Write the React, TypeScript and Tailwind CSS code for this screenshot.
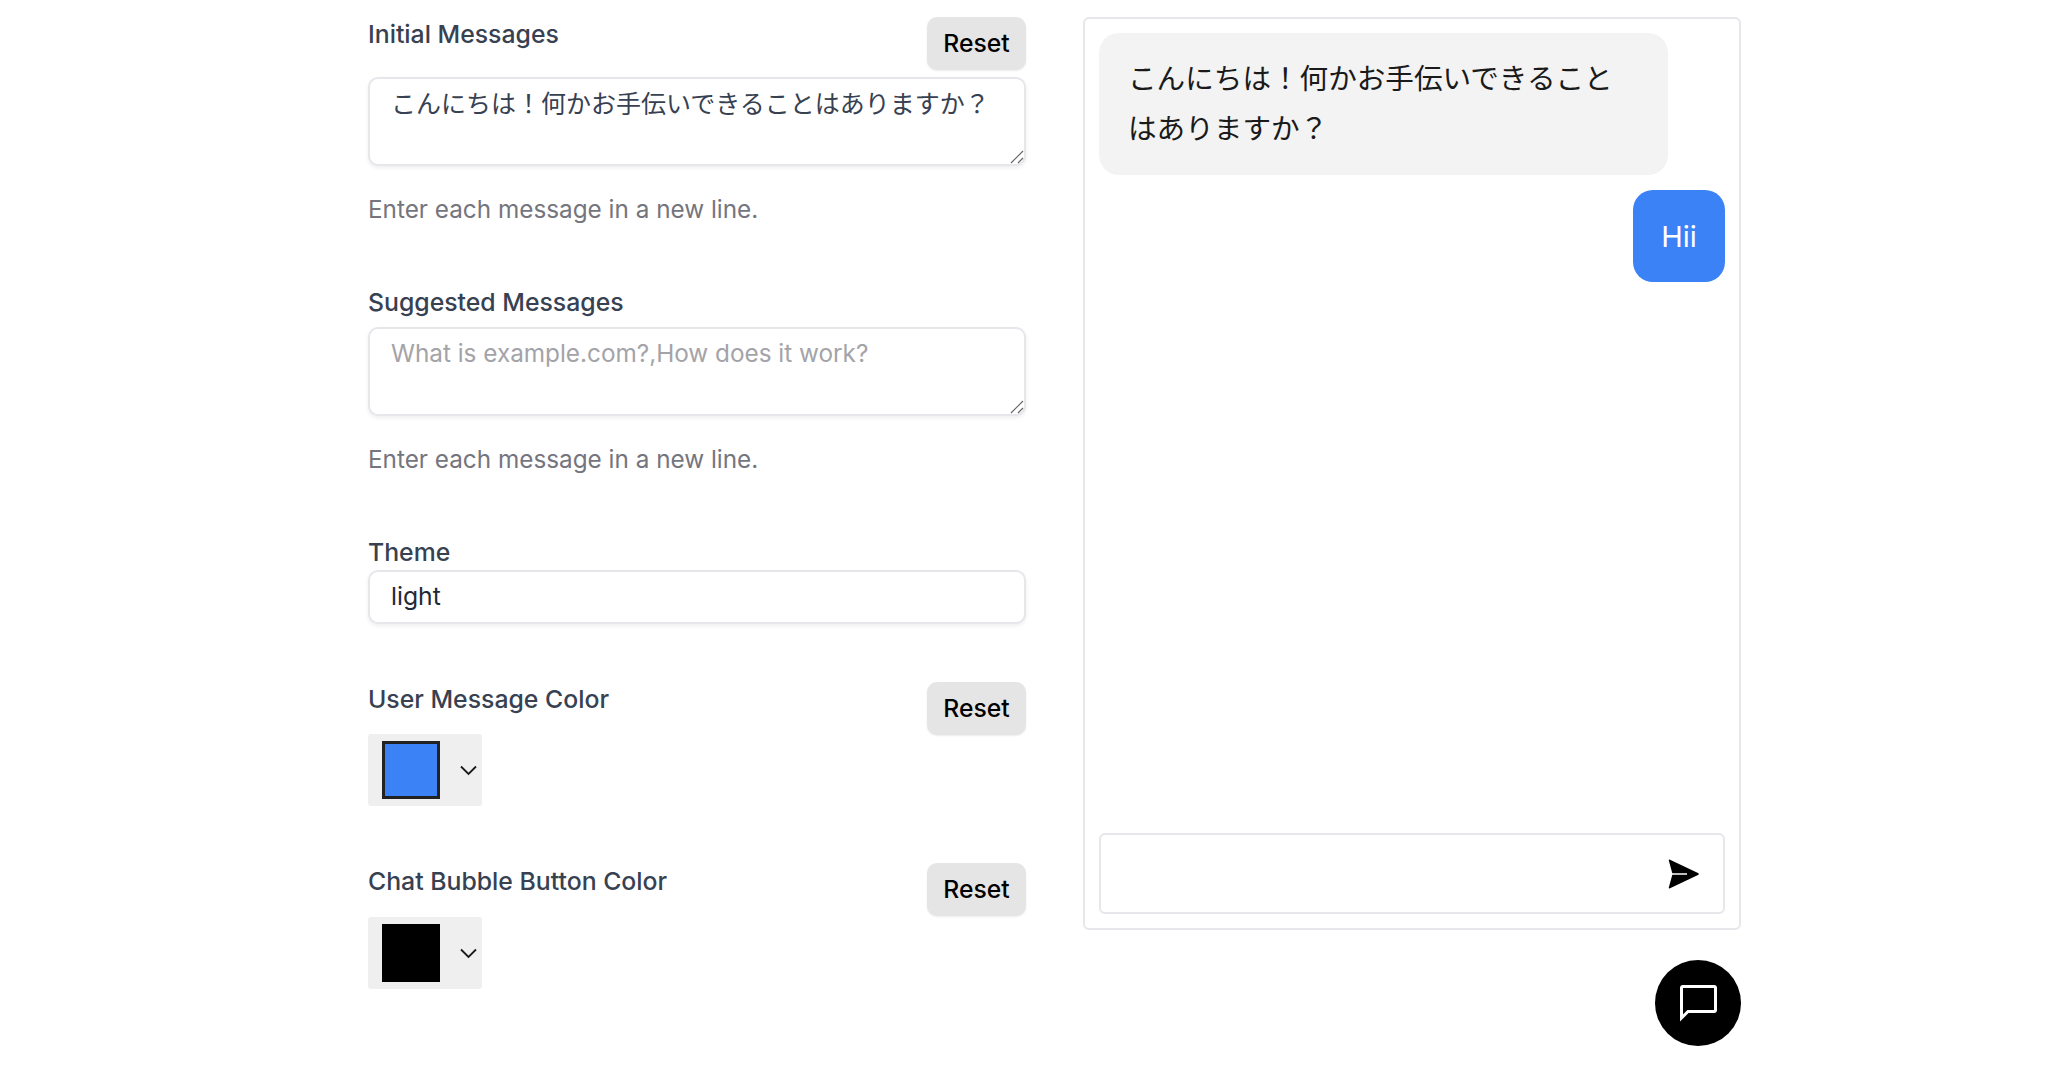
const font = { fontFamily: '"Inter", "Noto Sans CJK JP", sans-serif' };

function ResetButton() {
  return (
    <button className="w-[99px] h-[53px] pt-[1px] rounded-[10px] bg-[#e5e5e6] text-[24.7px] font-medium text-black shadow-[0_1px_2px_rgba(0,0,0,0.08)]">
      Reset
    </button>
  );
}

function Swatch({ color, border }: { color: string; border: string }) {
  return (
    <div className="w-[114px] h-[72px] rounded-[3px] bg-[#efefef] flex items-center pl-[14px]">
      <div className={`w-[58px] h-[58px] ${color} ${border}`} />
      <svg className="ml-[20px]" width="17" height="11" viewBox="0 0 17 11" fill="none">
        <path d="M1 1.5 L8.5 9 L16 1.5" stroke="#1a1a1a" strokeWidth="1.8" />
      </svg>
    </div>
  );
}

function Area({ value, placeholder, size, top }: { value?: string; placeholder?: string; size: string; top: string }) {
  return (
    <div className="relative">
      <textarea
        readOnly
        defaultValue={value}
        placeholder={placeholder}
        className={`block w-full h-[89px] resize-none rounded-[10px] border-2 border-[#e5e7eb] bg-white pl-[21px] pr-[22px] ${top} ${size} leading-[32px] text-[#374151] placeholder:text-[#a3a3a8] shadow-[0_2px_4px_rgba(0,0,0,0.07)] outline-none`}
        style={font}
      />
      <svg className="absolute right-[2px] bottom-[2px]" width="14" height="14" viewBox="0 0 14 14" fill="none">
        <path d="M1 13 L13 1 M8 13 L13 8" stroke="#666" strokeWidth="1.2" />
      </svg>
    </div>
  );
}

export default function App() {
  return (
    <div className="w-full h-[1081px] bg-white overflow-hidden flex pt-[17px] pl-[368px]" style={font}>
      <div className="w-[658px] shrink-0">
        <div className="flex justify-between items-start h-[60px]">
          <span className="text-[24.8px] leading-[32px] mt-[1px] font-medium text-[#374151]">Initial Messages</span>
          <ResetButton />
        </div>
        <Area size="text-[25px]" top="pt-[9px]" value="こんにちは！何かお手伝いできることはありますか？" />
        <p className="mt-[27px] text-[24.3px] leading-[32px] text-[#75757e]">Enter each message in a new line.</p>

        <p className="mt-[61px] text-[24.8px] leading-[32px] font-medium text-[#374151]">Suggested Messages</p>
        <div className="mt-[9px]">
          <Area size="text-[24.3px]" top="pt-[8px]" placeholder="What is example.com?,How does it work?" />
        </div>
        <p className="mt-[27px] text-[24.3px] leading-[32px] text-[#75757e]">Enter each message in a new line.</p>

        <p className="mt-[61px] text-[24.8px] leading-[32px] font-medium text-[#374151]">Theme</p>
        <div className="mt-[2px] h-[54px] rounded-[10px] border-2 border-[#e5e7eb] bg-white flex items-center px-[21px] text-[24.7px] text-[#1f2937] shadow-[0_2px_4px_rgba(0,0,0,0.07)]">
          light
        </div>

        <div className="mt-[58px] flex justify-between items-start h-[52px]">
          <span className="text-[24.8px] leading-[32px] mt-[1px] font-medium text-[#374151]">User Message Color</span>
          <ResetButton />
        </div>
        <Swatch color="bg-[#3b82f6]" border="border-[3px] border-[#222]" />

        <div className="mt-[57px] flex justify-between items-start h-[54px]">
          <span className="text-[24.8px] leading-[32px] mt-[2px] font-medium text-[#374151]">Chat Bubble Button Color</span>
          <ResetButton />
        </div>
        <Swatch color="bg-black" border="" />
      </div>

      <div className="w-[658px] shrink-0 ml-[57px] flex flex-col">
        <div className="h-[913px] rounded-[6px] border-2 border-[#e5e7eb] p-[14px] flex flex-col">
          <div className="w-[569px] h-[142px] rounded-[20px] bg-[#f3f3f3] pl-[29px] pr-[30px] pt-[21px] text-[28.6px] leading-[50px] text-[#1a1a1a]">
            こんにちは！何かお手伝いできることはありますか？
          </div>
          <div className="self-end mt-[15px] w-[92px] h-[92px] pt-[2px] rounded-[20px] bg-[#3b82f6] flex items-center justify-center text-[29px] text-white">
            Hii
          </div>
          <div className="mt-auto h-[81px] rounded-[6px] border-2 border-[#e5e7eb] flex items-center justify-end pr-[24px]">
            <svg width="31" height="30" viewBox="0 0 31 30">
              <path d="M1.5 0.5 L30.5 14.2 Q31 15 30.5 15.8 L1.5 29.5 Q0.5 29.5 0.8 28.5 L4.5 15 L0.8 1.5 Q0.5 0.5 1.5 0.5 Z" fill="#000" />
              <path d="M4 15 H19" stroke="#fff" strokeWidth="1.5" />
            </svg>
          </div>
        </div>
        <div className="self-end mt-[30px] w-[86px] h-[86px] rounded-full bg-black flex items-center justify-center">
          <svg width="38" height="38" viewBox="0 0 38 38" fill="none">
            <path d="M2.5 34 V4 Q2.5 2.5 4 2.5 H35 Q36.5 2.5 36.5 4 V26 Q36.5 27.5 35 27.5 H9 Z" stroke="#fff" strokeWidth="3" strokeLinejoin="miter" />
          </svg>
        </div>
      </div>
    </div>
  );
}
